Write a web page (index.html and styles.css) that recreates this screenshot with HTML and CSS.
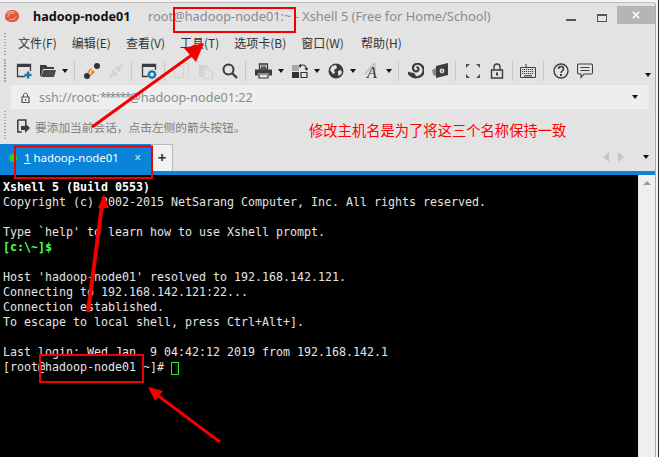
FILE: index.html
```html
<!DOCTYPE html>
<html lang="zh">
<head>
<meta charset="utf-8">
<title>Xshell 5</title>
<link rel="stylesheet" href="styles.css">
</head>
<body>
<div class="window">
  <header class="titlebar">
    <svg class="app-icon" viewBox="0 0 16 14"><path d="M1 8C1 3 5 .5 9 1c4 .5 6.500 3 6 7-.4 3.500-4 5.500-8 5C3.500 12.600 1 11 1 8Z" fill="#e2583e"/><path d="M4 8c0-3 3-4.500 5.500-3.500M6 10c2 1 5 .5 6-2.500M3 5c2-2.500 6-3 8-1.500" fill="none" stroke="#f8c4b4" stroke-width="1"/></svg>
    <span class="host">hadoop-node01</span>
    <span class="caption">root@hadoop-node01:~ - Xshell 5 (Free for Home/School)</span>
    <div class="winbtns">
      <span class="btn-min"></span>
      <span class="btn-max"></span>
      <span class="btn-close"><svg viewBox="0 0 10 10"><path d="M1 1l8 8M9 1l-8 8" stroke="#fff" stroke-width="2"/></svg></span>
    </div>
  </header>

  <nav class="menubar grip">
    <span>文件(F)</span><span>编辑(E)</span><span>查看(V)</span><span>工具(T)</span><span>选项卡(B)</span><span>窗口(W)</span><span class="help">帮助(H)</span>
  </nav>

  <div class="toolbar grip">
    <svg class="tool" viewBox="0 0 16 16"><path d="M9 13.500H1.500V1.500h13V8" fill="none" stroke="#3c3c3c" stroke-width="1.300"/><path d="M1 1h14v3H1z" fill="#3c3c3c"/><path d="M12 8.500v7M8.500 12h7" stroke="#1677a8" stroke-width="2.400"/></svg>
    <svg class="tool" viewBox="0 0 16 16"><path d="M0 2h6l1.500 2H14v2H3L1 13H0Z" fill="#3c3c3c"/><path d="M3.500 7H16l-2 7H1Z" fill="#4a4a4a"/></svg>
    <span class="caret"></span>
    <span class="sep"></span>
    <svg class="tool" viewBox="0 0 16 16"><circle cx="13" cy="3" r="3" fill="#333"/><circle cx="3" cy="13" r="3" fill="#333"/><path d="M3 9l4-4 4 4-4 4Z" fill="#e59138"/><path d="M6 9l3-3M5 11l2-2" stroke="#fff" stroke-width="1"/></svg>
    <svg class="tool" viewBox="0 0 16 16"><path d="M1 15l4-4M11 5l4-4" stroke="#cfcfcf" stroke-width="2"/><path d="M3 8.500l4.500 4.500 2-2-4.500-4.500ZM7 4.500l4.500 4.500 1.500-2L9 3Z" fill="#cfcfcf"/></svg>
    <span class="sep"></span>
    <svg class="tool" viewBox="0 0 16 16"><path d="M7 13.500H1.500V1.500h13V7" fill="none" stroke="#3c3c3c" stroke-width="1.300"/><path d="M1 1h14v3H1z" fill="#3c3c3c"/><circle cx="11" cy="11.500" r="3" fill="none" stroke="#1677a8" stroke-width="2.200"/><path d="M11 7v2M11 14v2M6.500 11.500h2M13.500 11.500h2M8 8.500l1 1M14 8.500l-1 1M8 14.500l1-1M14 14.500l-1-1" stroke="#1677a8" stroke-width="1.400"/></svg>
    <span class="sep"></span>
    <svg class="tool" viewBox="0 0 16 16"><path d="M.5 3.500h9v11h-9zM5 .5h9.500v11" fill="none" stroke="#d2d2d2" stroke-width="1"/></svg>
    <svg class="tool" viewBox="0 0 16 16"><path d="M1 2h9v3H5v9H1Z" fill="#d2d2d2"/><path d="M6 6h5l3.500 3v6.500H6Z" fill="none" stroke="#d2d2d2" stroke-width="1.200"/></svg>
    <svg class="tool" viewBox="0 0 16 16"><circle cx="6.500" cy="6.500" r="5" fill="none" stroke="#3c3c3c" stroke-width="2"/><path d="M10.500 10.500l4.500 4.500" stroke="#3c3c3c" stroke-width="2.400"/></svg>
    <span class="sep"></span>
    <svg class="tool wide" viewBox="0 0 17 16"><path d="M4.500 1h8v5h-8z" fill="none" stroke="#3c3c3c" stroke-width="1.300"/><path d="M6 3h5M6 4.600h5" stroke="#3c3c3c"/><path d="M0 6.500h17v6H14V10H3v2.500H0Z" fill="#3c3c3c"/><path d="M4 11h9v4H4z" fill="none" stroke="#3c3c3c" stroke-width="1.200"/></svg>
    <span class="caret"></span>
    <svg class="tool" viewBox="0 0 16 16"><path d="M0 2h7v6H0z" fill="#a8a8a8"/><path d="M0 9h7v6H0z" fill="#333"/><path d="M9 9.500h6v5H9z" fill="none" stroke="#333" stroke-width="1.200"/><path d="M8 3c3-2 6-1 6.500 3" fill="none" stroke="#333" stroke-width="1.200"/><path d="M12.500 5h4L14.500 8ZM9 .5V5L6.500 3Z" fill="#333"/></svg>
    <span class="caret"></span>
    <svg class="tool" viewBox="0 0 16 16"><circle cx="8" cy="8" r="7.500" fill="#3c3c3c"/><path d="M4 3l4-1 1 3-3 2 1 3-2 1-3-4ZM10 8l3-1 1 3-3 3-1-2Z" fill="#e6e6e6"/></svg>
    <span class="caret"></span>
    <svg class="tool font-ic" viewBox="0 0 18 18"><path d="M1 12L11 1" stroke="#c4c4c4" stroke-width="2"/><path d="M11 1v8" stroke="#c4c4c4" stroke-width="1.500"/><text x="3" y="16" class="font-a">A</text></svg>
    <span class="caret"></span>
    <span class="sep"></span>
    <svg class="tool" viewBox="0 0 16 16"><path d="M0 9c2 5 7 6 10 5 4-1 6-4 5.500-8C15 2.500 11.500 0 8 1 5 2 4 5 6 7.500c1.500 1.500 4 1 4.500-1 .3-1.500-1-2.500-2-2" fill="none" stroke="#3c3c3c" stroke-width="2.200"/><path d="M0 9l6 1 3 4-4 .5Z" fill="#3c3c3c"/></svg>
    <svg class="tool" viewBox="0 0 16 16"><path d="M4 3l12-3v12L4 15Z" fill="#3c3c3c"/><path d="M0 7l4-2v8l-3-1Z" fill="#8a8a8a"/><circle cx="10" cy="8" r="2.400" fill="#e8e8e8"/><path d="M10 6.500v3" stroke="#333" stroke-width="1"/></svg>
    <span class="sep"></span>
    <svg class="tool" viewBox="0 0 16 16"><path d="M1 1h4L1 5ZM15 1v4l-4-4ZM1 15v-4l4 4ZM15 15h-4l4-4Z" fill="#555"/></svg>
    <svg class="tool" viewBox="0 0 16 16"><path d="M2.500 7h11v8h-11z" fill="none" stroke="#3c3c3c" stroke-width="1.400"/><path d="M5 7V4c0-4 6-4 6 0v3" fill="none" stroke="#3c3c3c" stroke-width="1.400"/><path d="M7 9.500h2v3H7z" fill="#3c3c3c"/></svg>
    <span class="sep tight"></span>
    <svg class="tool" viewBox="0 0 16 16"><path d="M.5 4.500h15v10H.5z" fill="none" stroke="#3c3c3c"/><path d="M2 6.500h12M2 8.500h12M2 10.500h12" stroke="#3c3c3c" stroke-dasharray="1.200 .8"/><path d="M4 12.800h8" stroke="#3c3c3c" stroke-width="1.200"/><path d="M6 4.500V1" stroke="#3c3c3c"/></svg>
    <span class="sep"></span>
    <svg class="tool" viewBox="0 0 16 16"><circle cx="8" cy="8" r="7" fill="none" stroke="#3c3c3c" stroke-width="1.400"/><path d="M5.500 6c0-3.200 5-3.200 5 0 0 2-2.500 1.800-2.500 4" fill="none" stroke="#3c3c3c" stroke-width="1.500"/><path d="M7 11h2v2H7z" fill="#3c3c3c"/></svg>
    <svg class="tool" viewBox="0 0 16 16"><path d="M2 1h12q1.500 0 1.500 1.500v7Q15.500 11 14 11H7l-3 3.500V11H2Q.5 11 .5 9.500v-7Q.5 1 2 1Z" fill="none" stroke="#3c3c3c" stroke-width="1.100"/><path d="M3.500 4.500h9M3.500 7.500h9" stroke="#3c3c3c" stroke-width="1.100"/></svg>
    <span class="caret end"></span>
  </div>

  <div class="addressbar">
    <div class="address-field">
      <svg class="lock" viewBox="0 0 9 11"><path d="M1 5h7v5.500H1z" fill="none" stroke="#555" stroke-width="1.200"/><path d="M2.500 5V3c0-2.500 4-2.500 4 0v2" fill="none" stroke="#555"/><path d="M4 7h1v2H4z" fill="#555"/></svg>
      <span class="address">ssh://root:<span class="stars">******</span>@hadoop-node01:22</span>
      <span class="caret end"></span>
    </div>
  </div>

  <div class="hintbar grip">
    <svg class="hint-icon" viewBox="0 0 13 14"><path d="M.8 1h8v4M.8 1v12h4" fill="none" stroke="#3c3c3c" stroke-width="1.500"/><path d="M4 7h4V4l5 5-5 5v-3H4Z" fill="#3c3c3c"/></svg>
    <span class="hint">要添加当前会话，点击左侧的箭头按钮。</span>
    <span class="note">修改主机名是为了将这三个名称保持一致</span>
  </div>

  <div class="tabbar">
    <div class="tab">
      <span class="dot"></span>
      <span class="tab-label"><u>1</u> hadoop-node01</span>
      <span class="tab-close">×</span>
    </div>
    <div class="tab-add">+</div>
    <div class="tab-nav">
      <span class="nav-left"></span>
      <span class="nav-right"></span>
      <span class="caret"></span>
    </div>
  </div>
  <div class="tabline"></div>

  <div class="session">
    <pre class="terminal"><b class="white">Xshell 5 (Build 0553)</b>
Copyright (c) 2002-2015 NetSarang Computer, Inc. All rights reserved.

Type `help' to learn how to use Xshell prompt.
<b class="green">[c:\~]$</b>

Host 'hadoop-node01' resolved to 192.168.142.121.
Connecting to 192.168.142.121:22...
Connection established.
To escape to local shell, press Ctrl+Alt+].

Last login: Wed Jan  9 04:42:12 2019 from 192.168.142.1
[root@hadoop-node01 ~]# <span class="cursor"> </span></pre>
    <div class="scrollbar"><span class="arrow-up"></span></div>
  </div>
</div>
<div class="edge"></div>

<svg class="marks" viewBox="0 0 659 457">
  <rect class="box" x="174" y="8" width="121" height="24"/>
  <rect class="box" x="15" y="146.500" width="137" height="31.500"/>
  <rect class="box" x="40" y="355" width="103" height="27"/>
  <path class="line" d="M92 127L196 52"/>
  <path class="head" d="M204 43L184 48 196 62Z"/>
  <path class="line wide-line" d="M88 312L102 205"/>
  <path class="head" d="M104 194L98 208 109 208Z"/>
  <path class="line" d="M220 442L157 395"/>
  <path class="head" d="M148 387L163 391 155 401Z"/>
</svg>
</body>
</html>
```
FILE: styles.css
```css
* { box-sizing: border-box; }
html, body { margin: 0; padding: 0; }
body {
  width: 659px;
  height: 457px;
  overflow: hidden;
  position: relative;
  display: flex;
  background: #f3f3f3;
  font-family: "Noto Sans", "Noto Sans CJK SC", sans-serif;
}
.window {
  width: 656px;
  height: 455px;
  margin-top: 2px;
  display: flex;
  flex-direction: column;
  background: #e3e3e3;
  border-top: 1px solid #bdbdbd;
  border-right: 1px solid #a9a9a9;
  border-top-right-radius: 3px;
}
.edge {
  flex: 1;
  background: linear-gradient(90deg, #f3f3f3 0 2px, #2a2a2a 2px);
}

.titlebar {
  height: 28px;
  display: flex;
  align-items: center;
  flex: none;
  padding-bottom: 2px;
}
.app-icon { width: 16px; height: 14px; margin-left: 4px; flex: none; }
.host { margin-left: 13px; font-size: 12.600px; font-weight: 700; color: #111; width: 115px; }
.caption { font-size: 12.820px; color: #8b8b8b; white-space: nowrap; }
.winbtns { margin-left: auto; display: flex; align-items: flex-start; height: 28px; padding-top: 3px; margin-top: 2px; }
.btn-min { width: 10px; height: 2px; background: #555; margin-top: 13px; }
.btn-max { width: 10px; height: 8px; border: 1px solid #555; border-top-width: 2px; margin: 8px 0 0 21px; }
.btn-close { width: 38px; height: 18px; background: #b5b5b5; margin-left: 10px; display: flex; align-items: center; justify-content: center; }
.btn-close svg { width: 8px; height: 8px; }

.grip { position: relative; }
.grip::before {
  content: "";
  position: absolute;
  left: 4px;
  top: 2px;
  bottom: 2px;
  width: 2px;
  background: repeating-linear-gradient(180deg, #a6a6a6 0 1.500px, transparent 1.500px 3px);
}

.menubar {
  height: 26px;
  flex: none;
  display: flex;
  align-items: center;
  gap: 15px;
  padding: 0 0 4px 18px;
  font-family: "Noto Sans CJK SC", sans-serif;
  font-size: 12px;
  color: #333;
}
.help { margin-left: 2px; }

.toolbar {
  height: 28px;
  flex: none;
  display: flex;
  align-items: center;
  padding: 0 0 0 16px;
}
.tool { width: 16px; height: 16px; margin-right: 8px; flex: none; }
.tool.wide { width: 17px; }
.tool.font-ic { width: 18px; height: 18px; margin-right: 6px; overflow: visible; }
.font-a { font-family: "Liberation Serif", serif; font-style: italic; font-size: 16px; fill: #333; }
.caret {
  width: 0;
  height: 0;
  flex: none;
  border-left: 3.500px solid transparent;
  border-right: 3.500px solid transparent;
  border-top: 4px solid #111;
  margin: 0 7px 0 -2px;
}
.sep { width: 1px; height: 20px; background: #c9c9c9; margin: 0 9px 0 -1px; flex: none; }
.sep.tight { margin-right: 7px; }
.toolbar .caret + .tool { margin-left: 1px; }
.toolbar .caret.end { margin: 8px 0 0 auto; position: relative; left: -4px; }

.addressbar { height: 24px; flex: none; padding-left: 11px; padding-right: 6px; }
.address-field { height: 24px; background: #eeeeee; display: flex; align-items: center; padding-left: 10px; }
.lock { width: 9px; height: 11px; flex: none; }
.address { margin-left: 9px; font-size: 12.600px; color: #8b8b8b; }
.stars { letter-spacing: -2px; }
.address-field .caret.end { margin: 0 11px 0 auto; }

.hintbar { height: 34px; flex: none; display: flex; align-items: center; }
.hint-icon { width: 13px; height: 14px; margin-left: 17px; flex: none; }
.hint { margin-left: 5px; font-size: 11.700px; color: #808080; width: 274px; white-space: nowrap; font-family: "Noto Sans CJK SC", sans-serif; }
.note { font-size: 14.300px; color: #f00; white-space: nowrap; font-family: "Noto Sans CJK SC", sans-serif; margin-top: 6px; }

.tabbar { height: 28px; flex: none; display: flex; align-items: flex-end; }
.tab {
  width: 151px;
  height: 27px;
  background: #0a84d8;
  display: flex;
  align-items: center;
  position: relative;
  color: #fff;
  font-size: 11.400px;
}
.dot { width: 8px; height: 8px; border-radius: 50%; background: #22d422; margin-left: 9px; }
.tab-label { margin-left: 7px; white-space: nowrap; }
.tab-close { margin-left: auto; margin-right: 10px; font-size: 12px; color: #cfe6f7; }
.tab-add {
  width: 22px;
  height: 27px;
  background: #f2f2f2;
  border: 1px solid #b8b8b8;
  border-bottom: 0;
  text-align: center;
  font-size: 15px;
  font-weight: 700;
  line-height: 24px;
  color: #333;
}
.tab-nav { margin-left: auto; display: flex; align-items: center; height: 28px; padding-right: 6px; }
.tab-nav .caret { margin: 0; }
.nav-left, .nav-right { width: 0; height: 0; border-top: 5px solid transparent; border-bottom: 5px solid transparent; }
.nav-left { border-right: 6px solid #c6c6c6; margin-right: 9px; }
.nav-right { border-left: 6px solid #c6c6c6; margin-right: 19px; }
.tabline { height: 4px; flex: none; background: #0a84d8; border-top: 1px solid #5a6f7f; }

.session { flex: 1; min-height: 0; display: flex; }
.terminal {
  flex: 1;
  margin: 0;
  padding: 5px 0 0 3px;
  background: #000;
  color: #e4e4e4;
  font-family: "DejaVu Sans Mono", monospace;
  font-size: 11.630px;
  line-height: 15px;
  overflow: hidden;
}
.white { color: #fff; }
.green { color: #55ff55; }
.cursor { display: inline-block; width: 8px; height: 13px; border: 1px solid #22ee22; vertical-align: -3px; }
.scrollbar {
  width: 17px;
  flex: none;
  background: #efefef;
  border-left: 1px solid #e2e2e2;
  display: flex;
  justify-content: center;
  padding-top: 6px;
}
.arrow-up { width: 0; height: 0; border-left: 4px solid transparent; border-right: 4px solid transparent; border-bottom: 4px solid #9a9a9a; }

.marks { position: absolute; left: 0; top: 0; width: 659px; height: 457px; pointer-events: none; }
.box { fill: none; stroke: #f00000; stroke-width: 2; }
.line { fill: none; stroke: #f00000; stroke-width: 3; }
.wide-line { stroke-width: 4; }
.head { fill: #f00000; }
```
